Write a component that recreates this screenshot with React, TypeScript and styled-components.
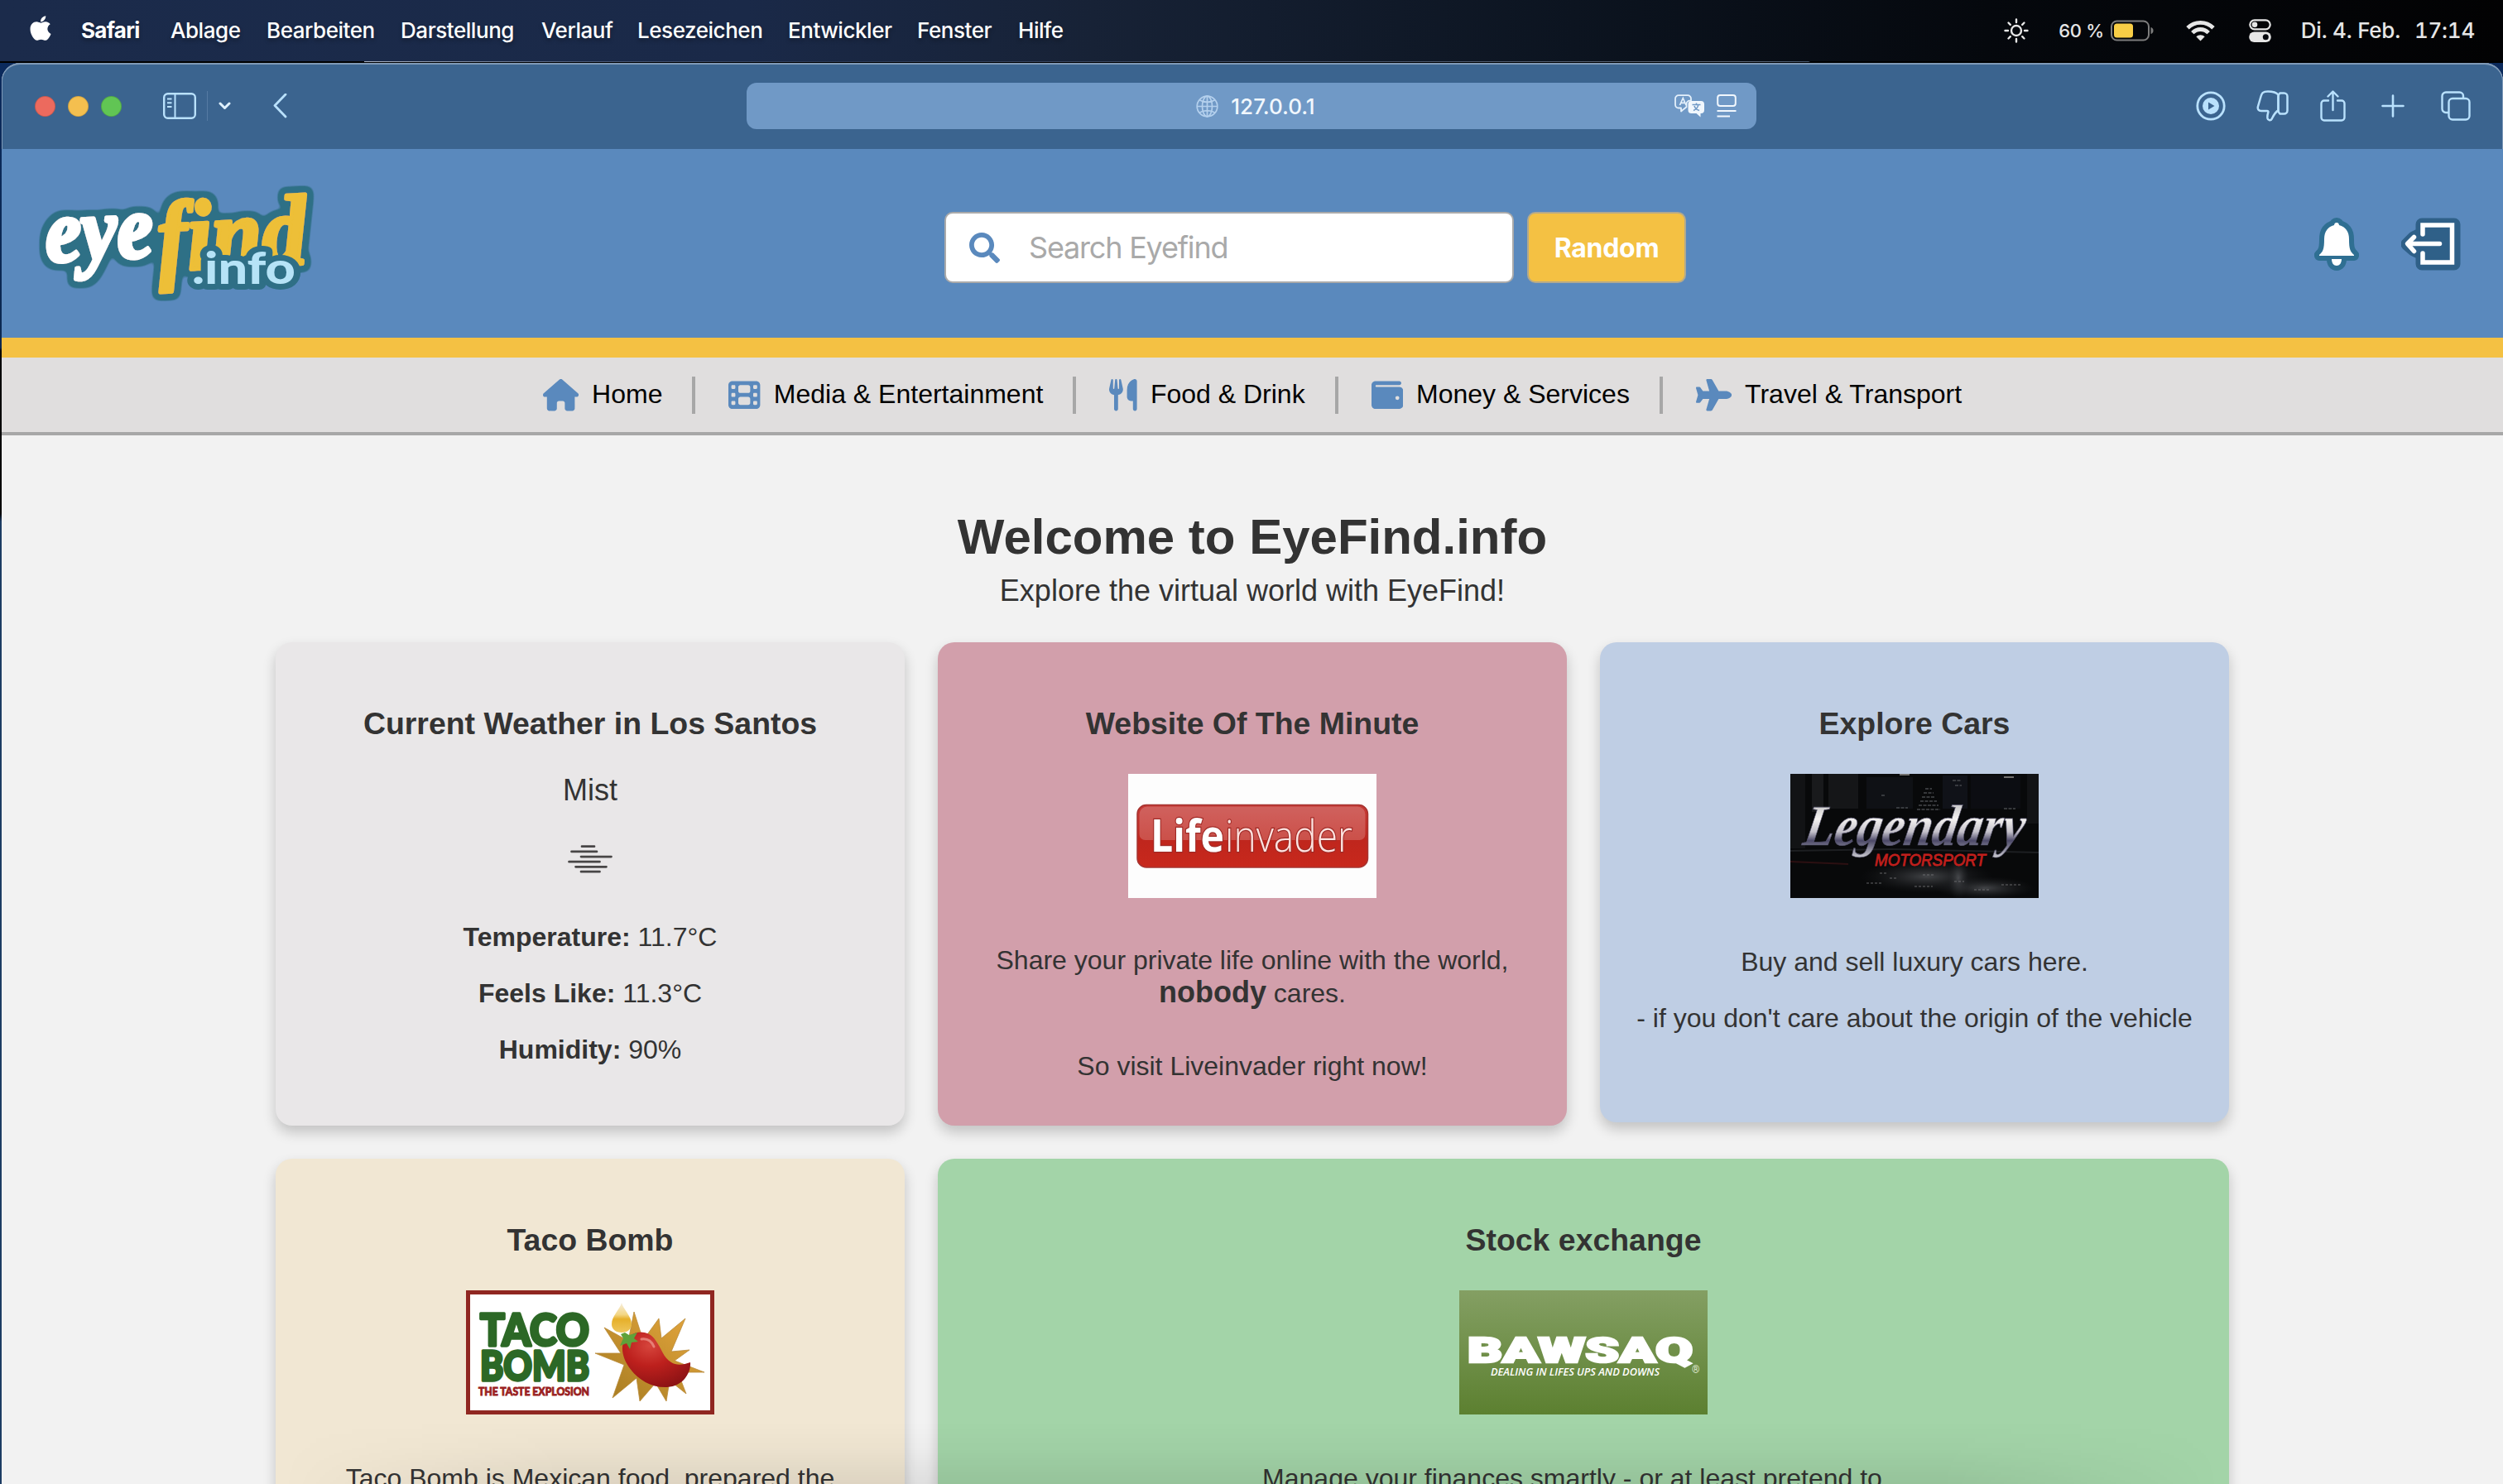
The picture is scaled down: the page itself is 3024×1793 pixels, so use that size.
import React from "react";
import styled, { createGlobalStyle } from "styled-components";
import { FaApple, FaSearch } from "react-icons/fa";
import {
  FaFilm,
  FaHouse,
  FaPlane,
  FaUtensils,
  FaWallet,
} from "react-icons/fa6";

const sans = `"Liberation Sans", Arial, sans-serif`;
const system = `Inter, Roboto, sans-serif`;
const ice = "#b9e1fd";

const GlobalStyle = createGlobalStyle`
  * { box-sizing: border-box; }
  html, body { margin: 0; padding: 0; background: #04060b; overflow: hidden; }
  h1, h3, p { margin: 0; }
  svg { display: block; flex: none; }
`;

const Desktop = styled.div`
  position: relative;
  width: 3024px;
  height: 1793px;
  overflow: hidden;
  display: flex;
  flex-direction: column;
  background: linear-gradient(#0b2a5c 76px, #0c2850 420px, #000 424px, #000 620px, #1d3c63 630px);
`;

/* ---------- macOS menu bar ---------- */

const MenuBar = styled.div`
  flex: none;
  height: 74px;
  display: flex;
  align-items: center;
  background: linear-gradient(90deg, #1b2b4b 0, #1a2948 900px, #172236 1320px, #0c1420 1900px, #05080d 2400px, #020203 100%);
  font-family: ${system};
  color: #fff;
`;

/* sliver of wallpaper between the menu bar and the window */
const MenuEdge = styled.div`
  flex: none;
  height: 2px;
  border-bottom: 1px solid #000;
  background: linear-gradient(90deg, #000 440px, #aab3c2 440px, #4b5a78 700px, #2a3956 1000px, #5c6676 2100px, #45566c 2185px, #000 2187px);
`;

const AppleSlot = styled.div`
  width: 98px;
  padding: 0 0 6px 32px;
`;

const MenuItem = styled.div<{ $w: number; $bold?: boolean }>`
  width: ${(p) => p.$w}px;
  font-size: 26px;
  line-height: 32px;
  font-weight: ${(p) => (p.$bold ? 700 : 500)};
  letter-spacing: ${(p) => (p.$bold ? "-0.7px" : "-0.45px")};
  white-space: nowrap;
  text-shadow: 0 3px 5px rgba(0, 0, 0, 0.3);
`;

const Status = styled.div`
  margin-left: auto;
  display: flex;
  align-items: center;
  padding-right: 34px;
  color: #e6e6e6;
`;

const Battery = styled.div`
  display: flex;
  align-items: center;
  gap: 8px;
  margin: 0 39px 0 36px;
  font-size: 22px;
  font-weight: 500;
  letter-spacing: -0.3px;
  white-space: nowrap;
`;

const Clock = styled.div`
  display: flex;
  gap: 17px;
  margin-left: 36px;
  font-size: 26px;
  line-height: 32px;
  font-weight: 500;
  letter-spacing: -0.25px;
  font-variant-numeric: tabular-nums;
  white-space: nowrap;
`;

/* ---------- browser window ---------- */

const Window = styled.div`
  flex: 1;
  min-height: 0;
  margin-left: 2px;
  display: flex;
  flex-direction: column;
  border-radius: 22px 22px 0 0;
  overflow: hidden;
  background: #f2f2f2;
`;

const Toolbar = styled.div`
  flex: none;
  height: 104px;
  display: grid;
  grid-template-columns: 900px 1220px 1fr;
  align-items: center;
  background: #3b648f;
  border-radius: 22px 22px 0 0;
  box-shadow: inset 0 2px 0 #7f9ab8, inset 1px 0 0 #7f9ab8, inset -1px 0 0 #7f9ab8;
`;

const ToolbarLeft = styled.div`
  display: flex;
  align-items: center;
  padding-left: 40px;
`;

const Lights = styled.div`
  display: flex;
  gap: 15px;
  margin-right: 50px;
`;

const Light = styled.span<{ $color: string }>`
  width: 25px;
  height: 25px;
  border-radius: 50%;
  background: ${(p) => p.$color};
  border: 1px solid rgba(0, 0, 0, 0.15);
`;

const ToolDivider = styled.span`
  width: 1px;
  height: 36px;
  margin: 0 13px;
  background: #567ba3;
`;

const Address = styled.div`
  height: 56px;
  border-radius: 12px;
  background: #7099c6;
  display: grid;
  grid-template-columns: 1fr auto 1fr;
  align-items: center;
  font-family: ${system};
  font-size: 26px;
  font-weight: 500;
  color: #f1f7fd;
`;

const AddressText = styled.div`
  grid-column: 2;
  display: flex;
  align-items: center;
  gap: 15px;
  margin-left: 10px;
`;

const AddressTools = styled.div`
  display: flex;
  justify-content: flex-end;
  align-items: center;
  gap: 14px;
  padding-right: 24px;
`;

const ToolbarRight = styled.div`
  display: flex;
  justify-content: flex-end;
  align-items: center;
  padding-right: 39px;
`;

/* ---------- site header ---------- */

const SiteHeader = styled.header`
  flex: none;
  height: 252px;
  border-bottom: 24px solid #f4c143;
  background: #5a89bd;
  display: grid;
  grid-template-columns: 1139px 896px 1fr;
  align-items: center;
`;

const LogoLink = styled.div`
  padding-left: 18px;
`;

const SearchRow = styled.div`
  display: flex;
  gap: 16px;
  margin-top: 10px;
`;

const SearchBox = styled.div`
  width: 688px;
  height: 86px;
  display: flex;
  align-items: center;
  padding-left: 28px;
  gap: 35px;
  border: 2px solid #aaa;
  border-radius: 10px;
  background: #fff;
  color: #5a89bd;
`;

const Placeholder = styled.span`
  font-family: ${system};
  font-size: 36px;
  line-height: 42px;
  letter-spacing: -1.200px;
  color: #a9a9a9;
`;

const RandomButton = styled.button`
  width: 192px;
  height: 86px;
  padding: 0;
  border: 2px solid #b3a98c;
  border-radius: 10px;
  background: #f4c143;
  color: #fff;
  font: bold 32px ${system};
  letter-spacing: -0.3px;
`;

const HeaderActions = styled.div`
  display: flex;
  justify-content: flex-end;
  align-items: center;
  gap: 50px;
  margin-top: 2px;
  padding-right: 51px;
`;

const Nav = styled.nav`
  flex: none;
  height: 94px;
  border-bottom: 4px solid #a7a7a7;
  background: #e0dede;
  display: flex;
  justify-content: center;
  align-items: center;
  padding-top: 1px;
`;

const NavItem = styled.a<{ $icon: number }>`
  display: flex;
  align-items: center;
  gap: 16px;
  height: 45px;
  padding-right: 36px;
  margin-right: 40px;
  border-right: 4px solid #a7a7a7;
  font-family: ${sans};
  font-size: 32px;
  line-height: 36px;
  color: #000;
  white-space: nowrap;

  svg {
    color: #5a89bd;
    height: 38.4px;
    width: ${(p) => p.$icon}px;
  }
  &:last-child {
    padding-right: 0;
    margin-right: 0;
    border-right: 0;
  }
`;

const NavLabel = styled.span`
  padding-bottom: 4px;
`;

/* ---------- page content ---------- */

const Main = styled.main`
  flex: none;
  display: flex;
  flex-direction: column;
  align-items: center;
  padding-top: 89px;
  font-family: ${sans};
  color: #333;
  text-align: center;
`;

const Title = styled.h1`
  font-size: 60px;
  line-height: 68px;
`;

const Subtitle = styled.p`
  margin-top: 10px;
  font-size: 36px;
  line-height: 42px;
`;

const Cards = styled.div`
  display: grid;
  grid-template-columns: repeat(3, 760px);
  gap: 40px;
  align-items: start;
  margin-top: 41px;
`;

const Card = styled.section<{ $bg: string; $wide?: boolean; $h?: number }>`
  grid-column: span ${(p) => (p.$wide ? 2 : 1)};
  height: ${(p) => p.$h ?? 584}px;
  display: flex;
  flex-direction: column;
  align-items: center;
  padding-top: 76px;
  border-radius: 20px;
  background: ${(p) => p.$bg};
  box-shadow: 0 8px 16px rgba(0, 0, 0, 0.2);
`;

const CardTitle = styled.h3`
  font-size: 37.44px;
  line-height: 44px;
`;

const Condition = styled.p`
  margin: 38px 0 45px;
  font-size: 36px;
  line-height: 42px;
`;

const Banner = styled.div`
  width: 300px;
  height: 150px;
  margin-top: 39px;
`;

const Text = styled.p<{ $top?: number; $lh?: number; $end?: number }>`
  margin-top: ${(p) => p.$top ?? 32}px;
  padding-right: ${(p) => p.$end ?? 0}px;
  font-size: 32px;
  line-height: ${(p) => p.$lh ?? 36}px;
  white-space: nowrap;
`;

const Big = styled.strong`
  font-size: 36px;
  line-height: 36px;
`;

const DockShade = styled.div`
  position: absolute;
  left: 340px;
  right: 340px;
  bottom: 0;
  height: 76px;
  pointer-events: none;
  background: linear-gradient(rgba(0, 0, 0, 0), rgba(0, 0, 0, 0.02) 40%, rgba(0, 0, 0, 0.08));
  mask-image: linear-gradient(90deg, transparent, #000 340px, #000 calc(100% - 340px), transparent);
`;

/* ---------- drawings ---------- */

const SunIcon = () => (
  <svg width="30" height="30" viewBox="0 0 30 30" fill="none" stroke="#e6e6e6" strokeWidth="2.4" strokeLinecap="round">
    <circle cx="15" cy="15" r="6" />
    <path d="M15 1.5v3.5M15 25v3.5M1.5 15H5M25 15h3.5M5.5 5.5l2.3 2.3M22.2 22.2l2.3 2.3M24.5 5.5l-2.3 2.3M7.8 22.2l-2.3 2.3" />
  </svg>
);

const BatteryIcon = () => (
  <svg width="52" height="26" viewBox="0 0 52 26">
    <rect x="1" y="1.5" width="45" height="23" rx="6.5" fill="none" stroke="#7d7d7d" strokeWidth="2" />
    <rect x="4" y="4.5" width="23" height="17" rx="3.5" fill="#f8ce46" />
    <path d="M48.5 9v8c2-.6 3-2 3-4s-1-3.400-3-4z" fill="#7d7d7d" />
  </svg>
);

const WifiIcon = () => (
  <svg width="35" height="26" viewBox="0 0 35 26" fill="none" stroke="#e6e6e6" strokeWidth="4.800">
    <path d="M2 9.800C10.500 1.200 24.500 1.200 33 9.800" />
    <path d="M7.800 15.600c5.500-5.500 13.900-5.500 19.400 0" />
    <path d="M17.500 25.500l-5.200-5.300c2.900-2.700 7.500-2.700 10.400 0z" fill="#e6e6e6" stroke="none" />
  </svg>
);

const ControlIcon = () => (
  <svg width="27" height="28" viewBox="0 0 27 28">
    <rect x="1.300" y="1.300" width="24.400" height="11" rx="5.500" fill="none" stroke="#e6e6e6" strokeWidth="2.200" />
    <circle cx="7" cy="6.800" r="3.300" fill="#e6e6e6" />
    <rect x="0.200" y="15.500" width="26.600" height="12.500" rx="6.200" fill="#e6e6e6" />
    <circle cx="20.300" cy="21.700" r="3.500" fill="#05080d" />
  </svg>
);

const SidebarIcon = () => (
  <svg width="40" height="32" viewBox="0 0 40 32" fill="none" stroke={ice} strokeWidth="2.400">
    <rect x="1.200" y="1.200" width="37.600" height="29.600" rx="4.500" />
    <path d="M14.500 1v30M5 7.500h5.500M5 12.200h5.500M5 17h5.500" strokeWidth="2" />
  </svg>
);

const ChevronIcon = () => (
  <svg width="15" height="10" viewBox="0 0 15 10" fill="none" stroke="#dff1ff" strokeWidth="3" strokeLinecap="round" strokeLinejoin="round">
    <path d="M2 2l5.500 5.500L13 2" />
  </svg>
);

const BackSvg = styled.svg`
  margin-left: 51px;
`;

const BackIcon = () => (
  <BackSvg width="17" height="30" viewBox="0 0 17 30" fill="none" stroke={ice} strokeWidth="2.800" strokeLinecap="round" strokeLinejoin="round">
    <path d="M15 1L2 14.500l13 13.500" />
  </BackSvg>
);

const GlobeIcon = () => (
  <svg width="27" height="27" viewBox="0 0 27 27" fill="none" stroke="#b4d0ed" strokeWidth="1.700">
    <circle cx="13.500" cy="13.500" r="12.300" />
    <ellipse cx="13.500" cy="13.500" rx="6" ry="12.300" />
    <path d="M13.500 1v25M1 13.500h25M4 5.800c5.500 3.400 13.500 3.400 19 0M4 21.200c5.500-3.400 13.500-3.400 19 0" />
  </svg>
);

const TranslateIcon = () => (
  <svg width="37" height="28" viewBox="0 0 37 28">
    <path d="M5 1.200h11a4 4 0 0 1 4 4v2.500h-1.500a4 4 0 0 0-4 4v3.500L8 20.500v-4H5a4 4 0 0 1-4-4V5.200a4 4 0 0 1 4-4z" fill="none" stroke="#e4f0fb" strokeWidth="1.800" strokeLinejoin="round" />
    <path d="M6.500 13L10.300 4.500 14 13M7.800 10.300h5" fill="none" stroke="#e4f0fb" strokeWidth="1.700" />
    <path d="M20.500 8H32a4 4 0 0 1 4 4v7a4 4 0 0 1-4 4h-.5v4.500L26.500 23h-6a4 4 0 0 1-4-4v-7a4 4 0 0 1 4-4z" fill="#f1f7fd" />
    <path d="M21.500 12.500h10M26.500 10.500v2M23 19.500c3.500-1.500 5.300-3.800 5.800-7M24 14c.8 2.400 2.800 4.400 6 5.500" fill="none" stroke="#7099c6" strokeWidth="1.600" />
  </svg>
);

const ReaderIcon = () => (
  <svg width="24" height="28" viewBox="0 0 24 28" fill="none" stroke="#f1f7fd" strokeWidth="2">
    <rect x="1.200" y="1" width="21.600" height="13" rx="3" />
    <path d="M0.500 20h23M0.500 26.500h15.500" />
  </svg>
);

const PlayCircleIcon = () => (
  <svg width="36" height="36" viewBox="0 0 36 36">
    <circle cx="18" cy="18" r="16.200" fill="none" stroke={ice} strokeWidth="2.800" />
    <circle cx="18" cy="18" r="10" fill={ice} />
    <path d="M15 13.500v9l7.500-4.500z" fill="#3b648f" />
  </svg>
);

const Spaced = styled.div<{ $l: number }>`
  margin-left: ${(p) => p.$l}px;
`;

const ThumbDownIcon = () => (
  <svg width="39" height="38" viewBox="0 0 39 38" fill="none" stroke={ice} strokeWidth="2.500" strokeLinejoin="round">
    <path d="M26.500 5.500C24 2.500 20 1.500 14 1.500c-6.500 0-7.500 2.500-8.500 6L2 19.500c-.9 3.200.6 5.500 4 5.500h7c1.300 0 1.600 1 1.200 2.200-.8 2.600-1 4.800-.7 6.800.5 2.600 4 3 5.200.6 2.300-4.600 4-8.300 7.800-10.100z" />
    <path d="M28.500 3.500h5a4 4 0 0 1 4 4v17a4 4 0 0 1-4 4h-5c-1.300-1-2-2.500-2-4.500v-16c0-2 .7-3.500 2-4.500z" />
  </svg>
);

const ShareIcon = () => (
  <svg width="31" height="38" viewBox="0 0 31 38" fill="none" stroke={ice} strokeWidth="2.400" strokeLinecap="round" strokeLinejoin="round">
    <path d="M10 12.500H5a3.500 3.500 0 0 0-3.500 3.500v17A3.500 3.500 0 0 0 5 36.500h21a3.500 3.500 0 0 0 3.500-3.500V16a3.500 3.500 0 0 0-3.500-3.500h-5M15.500 24V2M9.500 7.500l6-6 6 6" />
  </svg>
);

const PlusIcon = () => (
  <svg width="28" height="28" viewBox="0 0 28 28" fill="none" stroke={ice} strokeWidth="2.600" strokeLinecap="round">
    <path d="M14 1.500v25M1.500 14h25" />
  </svg>
);

const TabsIcon = () => (
  <svg width="36" height="36" viewBox="0 0 36 36" fill="none" stroke={ice} strokeWidth="2.400">
    <rect x="9.500" y="9" width="25" height="25.500" rx="4.500" />
    <path d="M9.500 26H6a4.500 4.500 0 0 1-4.500-4.500V6A4.500 4.500 0 0 1 6 1.500h16.500A4.500 4.500 0 0 1 27 6v3" />
  </svg>
);

const EyefindLogo = () => (
  <svg width="390" height="220" viewBox="20 184 390 220" strokeLinejoin="round" strokeLinecap="round">
    <defs>
      <filter id="halo" x="20" y="184" width="390" height="220" filterUnits="userSpaceOnUse">
        <feMorphology in="SourceAlpha" operator="dilate" radius="5" />
        <feGaussianBlur stdDeviation="4" />
        <feComponentTransfer result="edge">
          <feFuncA type="linear" slope="7" intercept="-1.2" />
        </feComponentTransfer>
        <feFlood floodColor="#2f6f86" />
        <feComposite in2="edge" operator="in" />
        <feMerge>
          <feMergeNode />
          <feMergeNode in="SourceGraphic" />
        </feMerge>
      </filter>
    </defs>
    <g filter="url(#halo)" fontFamily="Liberation Serif, serif" fontWeight="bold" fontStyle="italic" strokeWidth="5">
      <g transform="translate(1 5) rotate(-3 200 300)">
        <text x="55" y="304" fontSize="108" textLength="130" lengthAdjust="spacingAndGlyphs" fill="#fff" stroke="#fff">eye</text>
        <text x="190" y="322" fontSize="120" textLength="180" lengthAdjust="spacingAndGlyphs" fill="#edbf37" stroke="#edbf37">find</text>
      </g>
    </g>
    <text x="232" y="343" textLength="125" lengthAdjust="spacingAndGlyphs" fontFamily="Lato, sans-serif" fontWeight="900" fontSize="54" fill="#b6e3f7" stroke="#2f6f86" strokeWidth="14" paintOrder="stroke">.info</text>
  </svg>
);

const BellIcon = () => (
  <svg width="56" height="66" viewBox="2795 262 56 66" strokeLinejoin="round">
    <path
      d="M2823 269c1.800 0 2.800 1.200 3 3 8 2 12 8 12 17 0 12 1.500 15 6 19v1h-42v-1c4.500-4 6-7 6-19 0-9 4-15 12-17 .2-1.800 1.200-3 3-3zM2817 313h12c0 5-2.500 8-6 8s-6-3-6-8z"
      fill="#2f6f92"
      stroke="#2f6f92"
      strokeWidth="12"
    />
    <path
      d="M2823 269c1.800 0 2.800 1.200 3 3 8 2 12 8 12 17 0 12 1.500 15 6 19v1h-42v-1c4.500-4 6-7 6-19 0-9 4-15 12-17 .2-1.800 1.200-3 3-3zM2817 313h12c0 5-2.500 8-6 8s-6-3-6-8z"
      fill="#fff"
    />
  </svg>
);

const ExitIcon = () => (
  <svg width="72" height="64" viewBox="0 0 72 64" strokeLinejoin="round" strokeLinecap="round">
    <path d="M25 8h39v48H25V44L15 39 7 32l8-8 10-5z" fill="#2f6088" stroke="#2f6088" strokeWidth="15" />
    <path d="M26 20V9h35.500v45H26V43" fill="none" stroke="#fff" strokeWidth="5.500" strokeLinejoin="miter" />
    <path d="M46.500 31.500H8M15.500 23.500L7.500 31.500l8 9" fill="none" stroke="#fff" strokeWidth="5.500" />
  </svg>
);

const MistIcon = () => (
  <svg width="54" height="34" viewBox="0 0 54 34" stroke="#484646" strokeWidth="2.700" strokeLinecap="round">
    <path d="M17 1.700h15M4.500 7.900h30.500M16 14.100h36.500M1.500 20.200h37M9.500 26.300h37M16 32.200h22.500" />
  </svg>
);

const LifeinvaderBanner = () => (
  <svg width="300" height="150" viewBox="0 0 300 150">
    <defs>
      <linearGradient id="liRed" x1="0" y1="0" x2="0" y2="1">
        <stop offset="0" stopColor="#c53b37" />
        <stop offset="0.550" stopColor="#bf261d" />
        <stop offset="1" stopColor="#c8281c" />
      </linearGradient>
    </defs>
    <rect width="300" height="150" fill="#fdfdfd" />
    <rect x="11" y="37.500" width="278.500" height="75.500" rx="11" fill="url(#liRed)" stroke="#a63431" strokeWidth="1.500" />
    <path d="M23 39.500h254a9.500 9.500 0 0 1 9.500 9.500v24a7 7 0 0 1-7 7h-259a7 7 0 0 1-7-7V49A9.500 9.500 0 0 1 23 39.500z" fill="#fff" fillOpacity="0.200" />
    <g fontFamily="Open Sans, Noto Sans, sans-serif" fill="#fff" fontSize="54" stroke="#a02a26" strokeWidth="2.500" paintOrder="stroke">
      <text x="27" y="94" fontWeight="700" textLength="89" lengthAdjust="spacingAndGlyphs">Life</text>
      <text x="117" y="94" fontWeight="300" textLength="154" lengthAdjust="spacingAndGlyphs" fill="#fde3e0">invader</text>
    </g>
  </svg>
);

const LegendaryBanner = () => (
  <svg width="300" height="150" viewBox="0 0 300 150">
    <defs>
      <linearGradient id="lgSilver" x1="0" y1="0" x2="0" y2="1">
        <stop offset="0" stopColor="#a9a8ac" />
        <stop offset="0.400" stopColor="#f4f2f0" />
        <stop offset="0.600" stopColor="#c4c1ca" />
        <stop offset="0.740" stopColor="#4c4968" />
        <stop offset="1" stopColor="#c9c9cf" />
      </linearGradient>
      <radialGradient id="lgWet">
        <stop offset="0" stopColor="#5a5c60" stopOpacity="0.700" />
        <stop offset="1" stopColor="#222428" stopOpacity="0" />
      </radialGradient>
    </defs>
    <rect width="300" height="150" fill="#08090a" />
    <g fill="#191a1c">
      <rect x="0" y="0" width="18" height="90" opacity="0.600" />
      <rect x="26" y="0" width="14" height="46" />
      <rect x="46" y="0" width="36" height="42" opacity="0.800" />
      <rect x="92" y="4" width="56" height="38" fill="#0f1115" />
      <rect x="184" y="2" width="30" height="40" fill="#101218" />
      <rect x="218" y="2" width="60" height="40" fill="#0c0d12" />
      <rect x="286" y="0" width="14" height="60" opacity="0.600" />
    </g>
    <path d="M163 18h8M161 23h12M159 28h16M157 33h20M155 38h24M153 43h28M128 41h14M196 8h10M199 14h8M258 42h14M110 26h4" stroke="#45484c" strokeWidth="1.600" strokeDasharray="4 1.500" />
    <path d="M132 1h12M258 4h12" stroke="#72706e" strokeWidth="2" />
    <path d="M0 93l120-2 180 4" stroke="#1d1f22" strokeWidth="2" fill="none" />
    <path d="M0 106l70 3" stroke="#2c1012" strokeWidth="2" />
    <ellipse cx="165" cy="124" rx="80" ry="20" fill="url(#lgWet)" />
    <ellipse cx="203" cy="126" rx="13" ry="26" fill="url(#lgWet)" />
    <ellipse cx="235" cy="138" rx="60" ry="14" fill="url(#lgWet)" />
    <path d="M92 132h20M120 126h10M150 136h22M160 122h14M198 130h12M222 140h18M255 134h24M108 120h8" stroke="#77797b" strokeOpacity="0.400" strokeWidth="2" strokeDasharray="3 2" />
    <text x="17" y="86" transform="skewX(-10) translate(12 0)" fontFamily="Liberation Serif, serif" fontStyle="italic" fontWeight="bold" fontSize="70" textLength="266" lengthAdjust="spacingAndGlyphs" fill="url(#lgSilver)" stroke="#55536c" strokeWidth="0.700">
      Legendary
    </text>
    <text x="102" y="111" fontFamily="Liberation Sans, sans-serif" fontStyle="italic" fontSize="20.500" textLength="134" lengthAdjust="spacingAndGlyphs" fill="#c01f1c" stroke="#c01f1c" strokeWidth="0.900">
      MOTORSPORT
    </text>
  </svg>
);

const TacoBanner = () => (
  <svg width="300" height="150" viewBox="0 0 300 150">
    <defs>
      <linearGradient id="tbGold" x1="1" y1="0" x2="0" y2="1">
        <stop offset="0" stopColor="#e8a83e" />
        <stop offset="1" stopColor="#a37a20" />
      </linearGradient>
      <linearGradient id="tbFlame" x1="0" y1="0" x2="0" y2="1">
        <stop offset="0" stopColor="#f7efdf" />
        <stop offset="0.400" stopColor="#f3d684" />
        <stop offset="0.550" stopColor="#e6b02a" />
        <stop offset="1" stopColor="#eec65c" />
      </linearGradient>
      <radialGradient id="tbRed" cx="0.400" cy="0.250" r="0.800">
        <stop offset="0" stopColor="#d6453c" />
        <stop offset="0.450" stopColor="#bd201d" />
        <stop offset="1" stopColor="#8b1214" />
      </radialGradient>
    </defs>
    <rect x="2.500" y="2.500" width="295" height="145" fill="#fff" stroke="#902721" strokeWidth="5" />
    <g fontFamily="Lato, sans-serif" fontWeight="900" fill="#2c6826" stroke="#2c6826" strokeWidth="3.500" strokeLinejoin="round">
      <text x="17" y="66.500" fontSize="53" textLength="132" lengthAdjust="spacingAndGlyphs">TACO</text>
      <text x="17" y="108.500" fontSize="50" textLength="132" lengthAdjust="spacingAndGlyphs">BOMB</text>
    </g>
    <text x="15" y="126.500" fontFamily="Lato, sans-serif" fontWeight="900" fontSize="14" textLength="134" lengthAdjust="spacingAndGlyphs" fill="#9a1f22" stroke="#9a1f22" strokeWidth="0.900">
      THE TASTE EXPLOSION
    </text>
    <path
      d="M203 26L212 54L217 56L233 34L236 58L265 34L248 74L270 72L252 85L288 99L256 99L266 125L246 109L242 134L229 112L210 134L206 106L177 130L191 90L156 76L187 76L167 45L196 61Z"
      fill="url(#tbGold)"
      stroke="#b98a3a"
      strokeWidth="0.800"
    />
    <path d="M188 15c2 8 12 16 12 26 0 6-5 10-12 10s-12-4-12-10c0-10 10-18 12-26z" fill="url(#tbFlame)" />
    <path d="M196 57c8-9 24-9 32 2 9 12 10 22 20 28 6 4 15 3 23 0 1 12-8 29-28 30-20 1-36-10-46-24-9-13-12-30-1-36z" fill="url(#tbRed)" />
    <path d="M212 59c7-1 12 2 15 9" stroke="#ef9b92" strokeWidth="3" fill="none" strokeLinecap="round" opacity="0.700" />
    <path d="M192 51l5 3 10-3-4 7 5 4-8 1-2 8-4-7-8 3 4-9-3-5z" fill="#5fa23a" />
  </svg>
);

const BawsaqBanner = () => (
  <svg width="300" height="150" viewBox="0 0 300 150">
    <defs>
      <linearGradient id="bqGreen" x1="0" y1="0" x2="0" y2="1">
        <stop offset="0" stopColor="#849f63" />
        <stop offset="1" stopColor="#5c8030" />
      </linearGradient>
    </defs>
    <rect width="300" height="150" fill="url(#bqGreen)" />
    <text x="10" y="87" fontFamily="Roboto, Lato, sans-serif" fontWeight="900" fontSize="43" textLength="272" lengthAdjust="spacingAndGlyphs" fill="#fff" stroke="#fff" strokeWidth="2.600">
      BAWSAQ
    </text>
    <text x="38" y="103" fontFamily="Open Sans, sans-serif" fontStyle="italic" fontWeight="600" fontSize="12" textLength="204" lengthAdjust="spacingAndGlyphs" fill="#fff">
      DEALING IN LIFES UPS AND DOWNS
    </text>
    <text x="281" y="100" fontFamily="Roboto, sans-serif" fontSize="12" fill="#dfe8d2">®</text>
  </svg>
);

/* ---------- data ---------- */

const menu = [
  { label: "Safari", w: 108, bold: true },
  { label: "Ablage", w: 116 },
  { label: "Bearbeiten", w: 162 },
  { label: "Darstellung", w: 170 },
  { label: "Verlauf", w: 116 },
  { label: "Lesezeichen", w: 182 },
  { label: "Entwickler", w: 156 },
  { label: "Fenster", w: 122 },
  { label: "Hilfe", w: 70 },
];

const nav = [
  { label: "Home", Icon: FaHouse, w: 43.2 },
  { label: "Media & Entertainment", Icon: FaFilm, w: 38.4 },
  { label: "Food & Drink", Icon: FaUtensils, w: 33.6 },
  { label: "Money & Services", Icon: FaWallet, w: 38.4 },
  { label: "Travel & Transport", Icon: FaPlane, w: 43.2 },
];

const weather = [
  ["Temperature:", "11.7°C"],
  ["Feels Like:", "11.3°C"],
  ["Humidity:", "90%"],
];

export default function App() {
  return (
    <Desktop>
      <GlobalStyle />
      <MenuBar>
        <AppleSlot>
          <FaApple size={34} />
        </AppleSlot>
        {menu.map((m) => (
          <MenuItem key={m.label} $w={m.w} $bold={m.bold}>
            {m.label}
          </MenuItem>
        ))}
        <Status>
          <SunIcon />
          <Battery>
            60 % <BatteryIcon />
          </Battery>
          <WifiIcon />
          <Spaced $l={41}>
            <ControlIcon />
          </Spaced>
          <Clock>
            <span>Di. 4. Feb.</span>
            <span>17:14</span>
          </Clock>
        </Status>
      </MenuBar>
      <MenuEdge />

      <Window>
        <Toolbar>
          <ToolbarLeft>
            <Lights>
              <Light $color="#ec6a5e" />
              <Light $color="#f4bf4f" />
              <Light $color="#61c554" />
            </Lights>
            <SidebarIcon />
            <ToolDivider />
            <ChevronIcon />
            <BackIcon />
          </ToolbarLeft>
          <Address>
            <AddressText>
              <GlobeIcon />
              127.0.0.1
            </AddressText>
            <AddressTools>
              <TranslateIcon />
              <ReaderIcon />
            </AddressTools>
          </Address>
          <ToolbarRight>
            <PlayCircleIcon />
            <Spaced $l={37}>
              <ThumbDownIcon />
            </Spaced>
            <Spaced $l={38}>
              <ShareIcon />
            </Spaced>
            <Spaced $l={43}>
              <PlusIcon />
            </Spaced>
            <Spaced $l={44}>
              <TabsIcon />
            </Spaced>
          </ToolbarRight>
        </Toolbar>

        <SiteHeader>
          <LogoLink>
            <EyefindLogo />
          </LogoLink>
          <SearchRow>
            <SearchBox>
              <FaSearch size={37} />
              <Placeholder>Search Eyefind</Placeholder>
            </SearchBox>
            <RandomButton>Random</RandomButton>
          </SearchRow>
          <HeaderActions>
            <BellIcon />
            <ExitIcon />
          </HeaderActions>
        </SiteHeader>

        <Nav>
          {nav.map(({ label, Icon, w }) => (
            <NavItem key={label} $icon={w}>
              <Icon />
              <NavLabel>{label}</NavLabel>
            </NavItem>
          ))}
        </Nav>

        <Main>
          <Title>Welcome to EyeFind.info</Title>
          <Subtitle>Explore the virtual world with EyeFind!</Subtitle>
          <Cards>
            <Card $bg="#e9e7e8">
              <CardTitle>Current Weather in Los Santos</CardTitle>
              <Condition>Mist</Condition>
              <MistIcon />
              {weather.map(([name, value], i) => (
                <Text key={name} $top={i === 0 ? 59 : 32}>
                  <strong>{name}</strong> {value}
                </Text>
              ))}
            </Card>

            <Card $bg="#d29fab">
              <CardTitle>Website Of The Minute</CardTitle>
              <Banner>
                <LifeinvaderBanner />
              </Banner>
              <Text $top={55} $lh={40}>
                Share your private life online with the world,
                <br />
                <Big>nobody</Big> cares.
              </Text>
              <Text $top={50}>So visit Liveinvader right now!</Text>
            </Card>

            <Card $bg="#bfcee4" $h={580}>
              <CardTitle>Explore Cars</CardTitle>
              <Banner>
                <LegendaryBanner />
              </Banner>
              <Text $top={59}>Buy and sell luxury cars here.</Text>
              <Text>- if you don't care about the origin of the vehicle</Text>
            </Card>

            <Card $bg="#f1e7d3">
              <CardTitle>Taco Bomb</CardTitle>
              <Banner>
                <TacoBanner />
              </Banner>
              <Text $top={59}>Taco Bomb is Mexican food, prepared the</Text>
            </Card>

            <Card $bg="#a3d4a8" $wide>
              <CardTitle>Stock exchange</CardTitle>
              <Banner>
                <BawsaqBanner />
              </Banner>
              <Text $top={59} $end={27}>
                Manage your finances smartly - or at least pretend to
              </Text>
            </Card>
          </Cards>
        </Main>
      </Window>
      <DockShade />
    </Desktop>
  );
}
